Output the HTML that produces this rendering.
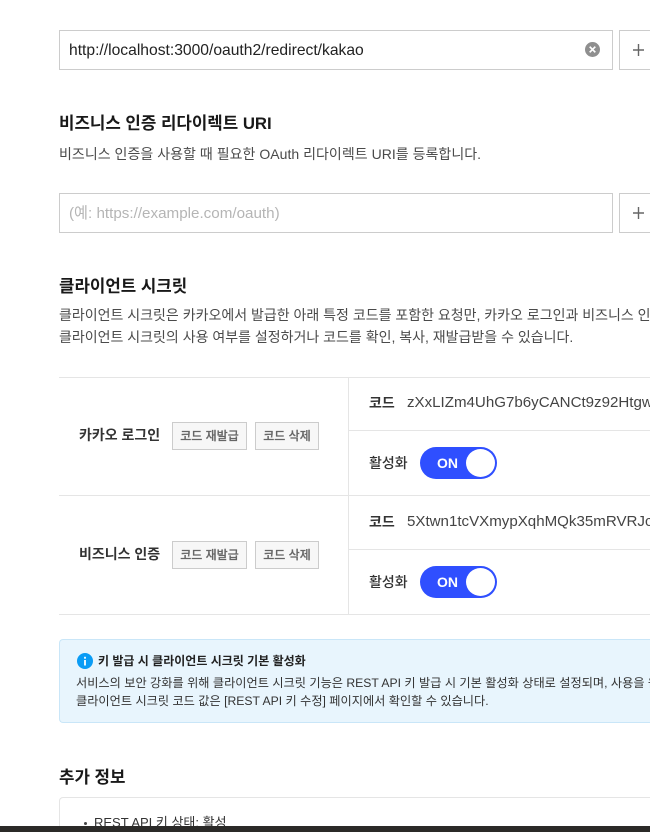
<!DOCTYPE html>
<html lang="ko"><head><meta charset="utf-8">
<style>
html,body{margin:0;padding:0;background:#fff;width:650px;height:832px;overflow:hidden}
body{position:relative;font-family:"Liberation Sans","Noto Sans CJK KR",sans-serif;color:#333}
.t{position:absolute;white-space:nowrap;line-height:20px;height:20px;overflow:hidden}
.b{position:absolute;box-sizing:border-box}
.input{border:1px solid #ccc;left:59px;width:554px;height:40px;background:#fff}
.plus{border:1px solid #ccc;border-right:0;left:619px;width:31px;height:40px;background:#fff}
.h{font-size:16.8px;font-weight:700;color:#191919;left:59px;height:24px;line-height:24px}
.d{font-size:14px;color:#4a4a4a;left:59px;width:591px}
.line{position:absolute;background:#e5e5e5;height:1px}
.vl{position:absolute;background:#e5e5e5;width:1px}
.btn{position:absolute;box-sizing:border-box;border:1px solid #ccc;background:#f7f7f7;color:#666;font-size:12px;font-weight:500;-webkit-text-stroke:.2px #666;height:28px;line-height:26px;text-align:center;white-space:nowrap}
.lab{font-size:14px;font-weight:700;color:#333}
.act{font-size:14px;font-weight:500;color:#333;left:369px}
.code{font-size:15.1px;color:#444;left:407px;width:243px}
.tog{position:absolute;left:420px;width:77px;height:32px;border-radius:16px;background:#2f4fff}
.tog i{position:absolute;left:46px;top:2px;width:29px;height:28px;border-radius:50%;background:#fff}
.tog span{position:absolute;left:17px;top:6px;font-size:14px;font-weight:700;color:#fff;line-height:20px}
</style></head><body>

<div class="b input" style="top:30px"></div>
<div class="t" style="left:69px;top:41px;font-size:15.65px;color:#222;height:20px">http://localhost:3000/oauth2/redirect/kakao</div>
<svg class="b" style="left:585px;top:42px" width="15" height="15" viewBox="0 0 15 15"><circle cx="7.5" cy="7.5" r="7.5" fill="#8f8f8f"/><path d="M4.7 4.7l5.6 5.6M10.3 4.7l-5.6 5.6" stroke="#fff" stroke-width="1.7"/></svg>
<div class="b plus" style="top:30px"></div>
<svg class="b" style="left:633px;top:44px" width="11" height="12" viewBox="0 0 11 12"><path d="M5.5 0v12M0 6h11" stroke="#666" stroke-width="1.4"/></svg>

<div class="t h" style="top:112px">비즈니스 인증 리다이렉트 URI</div>
<div class="t d" style="top:144px;letter-spacing:.03px">비즈니스 인증을 사용할 때 필요한 OAuth 리다이렉트 URI를 등록합니다.</div>

<div class="b input" style="top:193px"></div>
<div class="t" style="left:69px;top:204px;font-size:15.2px;color:#b5b5b5">(예: https://example.com/oauth)</div>
<div class="b plus" style="top:193px"></div>
<svg class="b" style="left:633px;top:207px" width="11" height="12" viewBox="0 0 11 12"><path d="M5.5 0v12M0 6h11" stroke="#666" stroke-width="1.4"/></svg>

<div class="t h" style="top:275px">클라이언트 시크릿</div>
<div class="t d" style="top:305px">클라이언트 시크릿은 카카오에서 발급한 아래 특정 코드를 포함한 요청만, 카카오 로그인과 비즈니스 인증을 허용합니다.</div>
<div class="t d" style="top:327px">클라이언트 시크릿의 사용 여부를 설정하거나 코드를 확인, 복사, 재발급받을 수 있습니다.</div>

<div class="line" style="left:59px;top:377px;width:591px"></div>
<div class="line" style="left:348px;top:430px;width:302px"></div>
<div class="line" style="left:59px;top:495px;width:591px"></div>
<div class="line" style="left:348px;top:549px;width:302px"></div>
<div class="line" style="left:59px;top:614px;width:591px"></div>
<div class="vl" style="left:348px;top:377px;height:237px"></div>

<div class="t lab" style="left:79px;top:425px">카카오 로그인</div>
<div class="btn" style="left:172px;top:422px;width:75px">코드 재발급</div>
<div class="btn" style="left:255px;top:422px;width:64px">코드 삭제</div>
<div class="t lab" style="left:369px;top:393px">코드</div>
<div class="t code" style="top:393px">zXxLIZm4UhG7b6yCANCt9z92HtgwQe7pLk</div>
<div class="t act" style="top:453px">활성화</div>
<div class="tog" style="top:447px"><span>ON</span><i></i></div>

<div class="t lab" style="left:79px;top:544px">비즈니스 인증</div>
<div class="btn" style="left:172px;top:541px;width:75px">코드 재발급</div>
<div class="btn" style="left:255px;top:541px;width:64px">코드 삭제</div>
<div class="t lab" style="left:369px;top:512px">코드</div>
<div class="t code" style="top:512px">5Xtwn1tcVXmypXqhMQk35mRVRJc0Ab2dKe</div>
<div class="t act" style="top:572px">활성화</div>
<div class="tog" style="top:566px"><span>ON</span><i></i></div>

<div class="b" style="left:59px;top:639px;width:591px;height:84px;background:#e8f5fd;border:1px solid #c9e6f8;border-right:0;border-radius:4px 0 0 4px"></div>
<svg class="b" style="left:77px;top:653px" width="16" height="16" viewBox="0 0 16 16"><circle cx="8" cy="8" r="8" fill="#0a9cf5"/><rect x="7.1" y="7" width="1.8" height="5.5" fill="#fff"/><rect x="7.1" y="3.8" width="1.8" height="1.9" fill="#fff"/></svg>
<div class="t" style="left:98px;top:651px;font-size:12px;font-weight:700;color:#222">키 발급 시 클라이언트 시크릿 기본 활성화</div>
<div class="t" style="left:76px;top:673px;width:574px;font-size:12.2px;color:#333">서비스의 보안 강화를 위해 클라이언트 시크릿 기능은 REST API 키 발급 시 기본 활성화 상태로 설정되며, 사용을 원하지 않으면</div>
<div class="t" style="left:76px;top:691px;width:574px;font-size:12.2px;color:#333">클라이언트 시크릿 코드 값은 [REST API 키 수정] 페이지에서 확인할 수 있습니다.</div>

<div class="t h" style="top:766px">추가 정보</div>
<div class="b" style="left:59px;top:797px;width:591px;height:29px;border:1px solid #e5e5e5;border-right:0;border-bottom:0;border-radius:4px 0 0 0"></div>
<div class="b" style="left:84px;top:822px;width:3px;height:3px;border-radius:50%;background:#444"></div>
<div class="t" style="left:94px;top:813px;height:13px;font-size:13px;color:#333">REST API 키 상태: 활성</div>
<div class="b" style="left:0;top:826px;width:650px;height:6px;background:#2b2a28"></div>
</body></html>
